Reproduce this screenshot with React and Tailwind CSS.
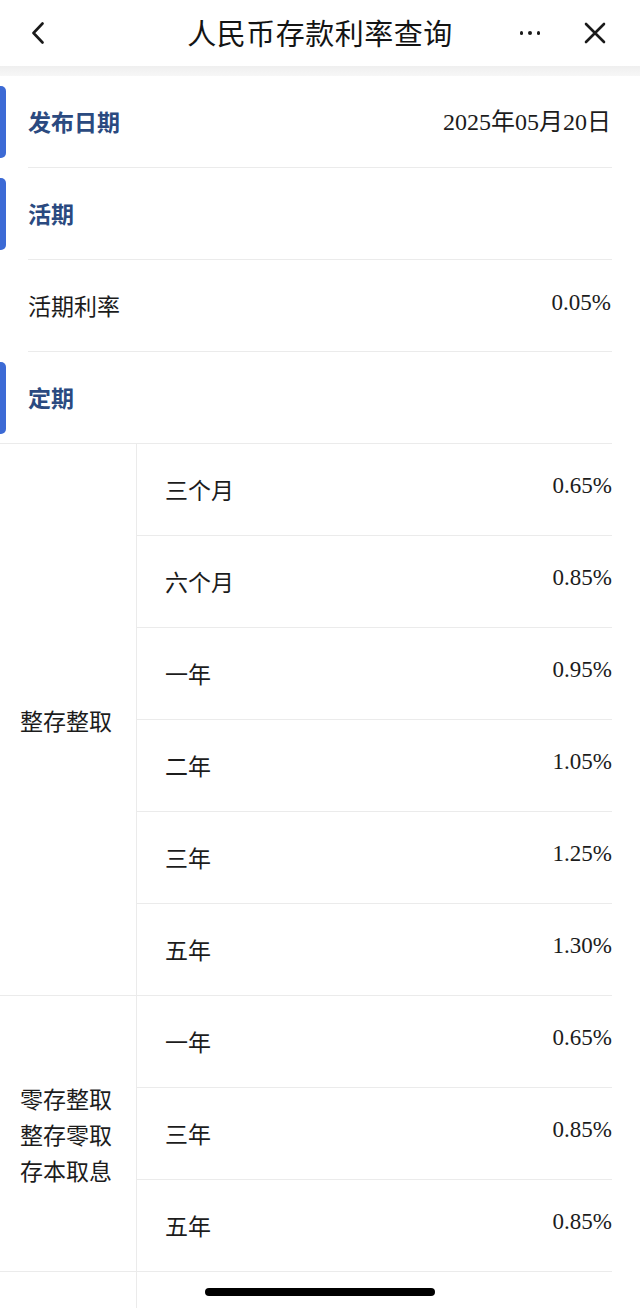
import React from "react";

const sans = "font-['Noto_Sans_CJK_SC','Noto_Sans',sans-serif]";
const serif = "font-['Liberation_Serif','Noto_Sans_CJK_SC',serif]";

function SectionRow({ title, value, divider = true, dividerFull = false }) {
  return (
    <div>
      <div className="flex items-center h-[91px]">
        <div className="w-[6px] h-[72px] rounded-r-[5px] bg-[#3c6ad5]" />
        <div className={`ml-[22px] text-[23px] font-bold text-[#2b4a80] ${sans}`}>{title}</div>
        <div className="flex-1" />
        {value && (
          <div className={`mr-[29px] text-[24px] text-[#1c1c1c] ${serif}`}>{value}</div>
        )}
      </div>
      {divider && (
        <div className={`h-px bg-[#ebebeb] mr-[28px] ${dividerFull ? "" : "ml-[28px]"}`} />
      )}
    </div>
  );
}

function PlainRow({ label, value }) {
  return (
    <div>
      <div className="flex items-center h-[91px]">
        <div className={`ml-[28px] text-[23px] text-[#1c1c1c] ${sans}`}>{label}</div>
        <div className="flex-1" />
        <div className={`mr-[29px] -mt-[4px] text-[23px] text-[#1c1c1c] ${serif}`}>{value}</div>
      </div>
      <div className="h-px bg-[#ebebeb] ml-[28px] mr-[28px]" />
    </div>
  );
}

function Group({ label, rows }) {
  return (
    <div className="flex mr-[28px] border-b border-[#ebebeb]">
      <div className="w-[137px] shrink-0 border-r border-[#ebebeb] flex items-center pl-[20px]">
        <div className={`text-[23px] leading-[36px] text-[#1c1c1c] ${sans}`}>
          {label.map((l, i) => (
            <div key={i}>{l}</div>
          ))}
        </div>
      </div>
      <div className="flex-1 flex flex-col divide-y divide-[#ebebeb]">
        {rows.map(([term, rate], i) => (
          <div key={i} className="h-[91px] box-content flex items-center">
            <div className={`ml-[28px] text-[23px] text-[#1c1c1c] ${sans}`}>{term}</div>
            <div className="flex-1" />
            <div className={`-mt-[6px] text-[23px] text-[#1c1c1c] ${serif}`}>{rate}</div>
          </div>
        ))}
      </div>
    </div>
  );
}

export default function App() {
  return (
    <div className="relative w-[640px] h-[1308px] overflow-hidden bg-white">
      {/* Header */}
      <div className="h-[66px] grid grid-cols-[1fr_auto_1fr] items-center">
        <div className="flex items-center pl-[31px]">
          <svg width="14" height="22" viewBox="0 0 14 22" fill="none">
            <path d="M11.5 1.5 L2.5 11 L11.5 20.5" stroke="#1a1a1a" strokeWidth="2.6" strokeLinecap="round" strokeLinejoin="round" />
          </svg>
        </div>
        <div className={`text-[29px] text-[#141414] tracking-[0.5px] ${sans}`}>人民币存款利率查询</div>
        <div className="flex items-center justify-end pr-[34px] gap-[44px]">
          <div className="flex items-center gap-[5px]">
            <div className="w-[3.5px] h-[3.5px] rounded-full bg-[#1a1a1a]" />
            <div className="w-[3.5px] h-[3.5px] rounded-full bg-[#1a1a1a]" />
            <div className="w-[3.5px] h-[3.5px] rounded-full bg-[#1a1a1a]" />
          </div>
          <svg width="22" height="22" viewBox="0 0 22 22" fill="none">
            <path d="M2 2 L20 20 M20 2 L2 20" stroke="#1a1a1a" strokeWidth="2.6" strokeLinecap="round" />
          </svg>
        </div>
      </div>
      <div className="h-[10px] bg-gradient-to-b from-[#efefef] to-[#f7f7f7]" />

      <SectionRow title="发布日期" value="2025年05月20日" />
      <SectionRow title="活期" />
      <PlainRow label="活期利率" value="0.05%" />
      <SectionRow title="定期" dividerFull />

      <Group
        label={["整存整取"]}
        rows={[
          ["三个月", "0.65%"],
          ["六个月", "0.85%"],
          ["一年", "0.95%"],
          ["二年", "1.05%"],
          ["三年", "1.25%"],
          ["五年", "1.30%"],
        ]}
      />
      <Group
        label={["零存整取", "整存零取", "存本取息"]}
        rows={[
          ["一年", "0.65%"],
          ["三年", "0.85%"],
          ["五年", "0.85%"],
        ]}
      />
      <Group label={[""]} rows={[["", ""]]} />

      <div className="absolute left-[205px] top-[1288px] w-[230px] h-[8px] rounded-full bg-black" />
    </div>
  );
}
